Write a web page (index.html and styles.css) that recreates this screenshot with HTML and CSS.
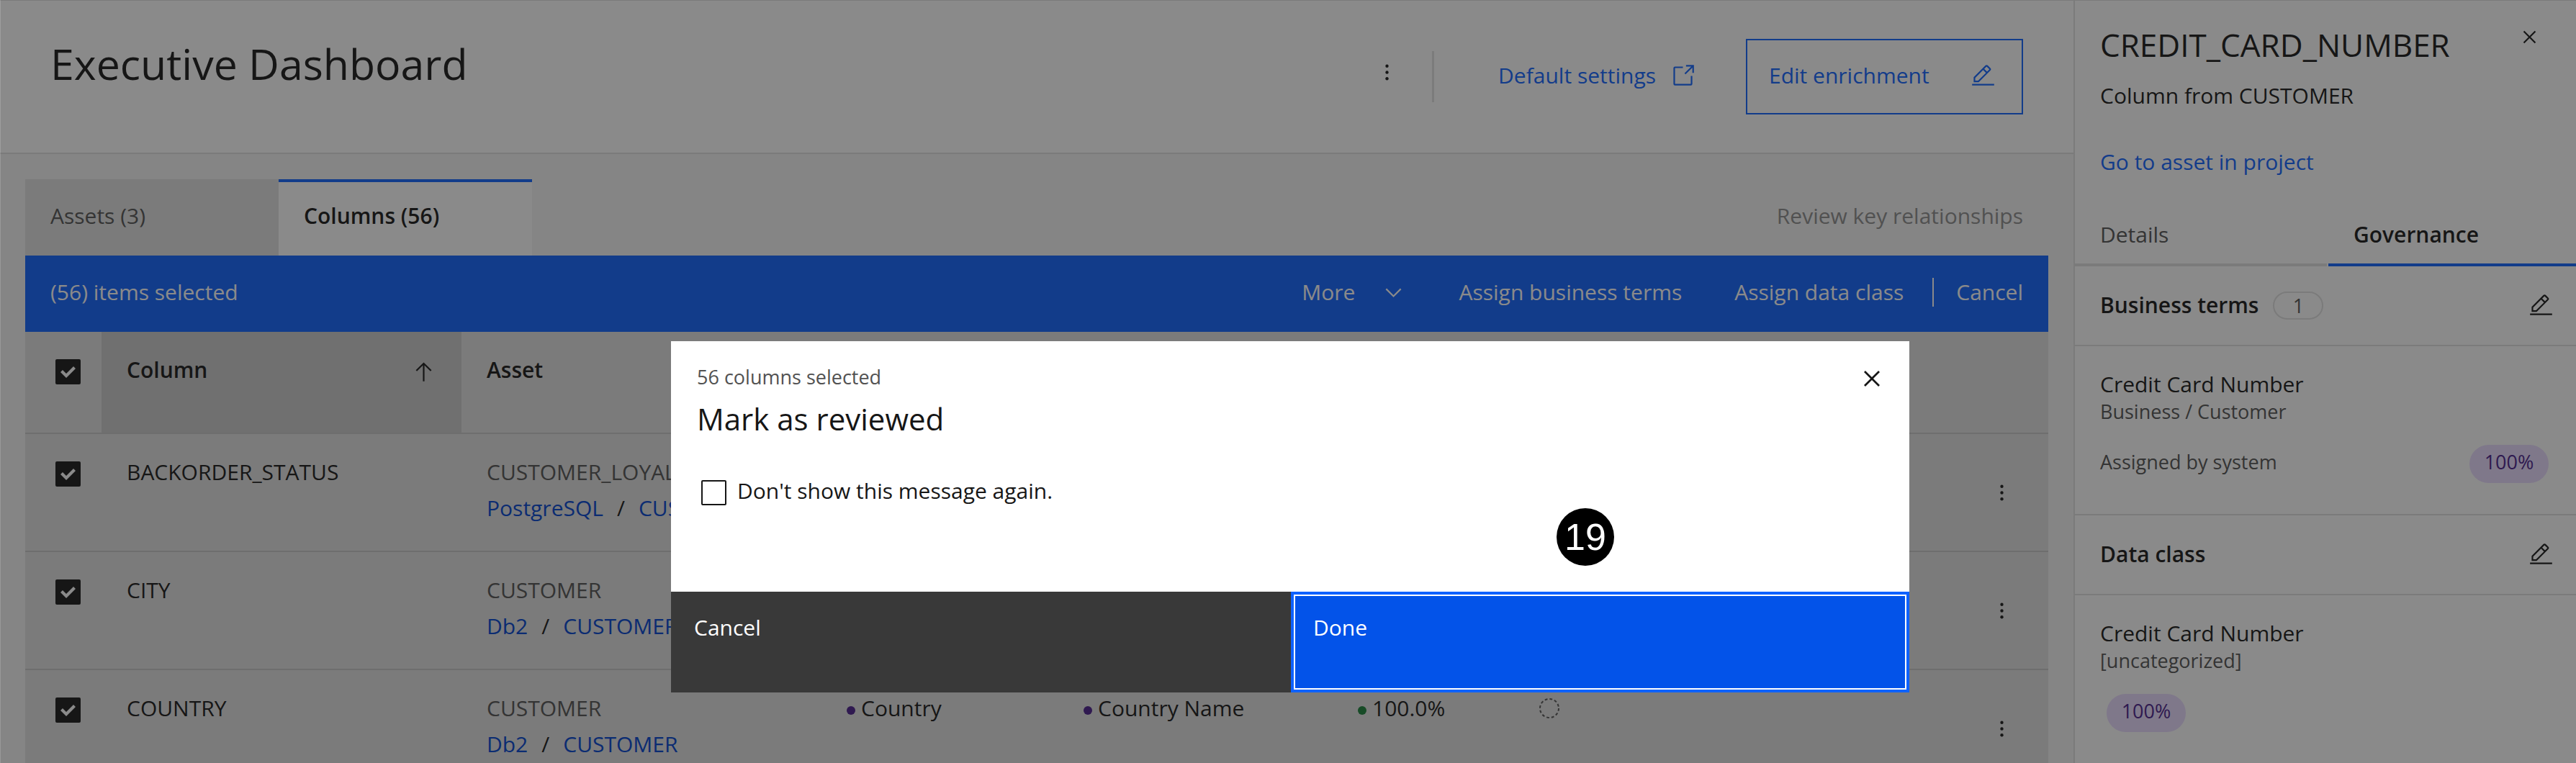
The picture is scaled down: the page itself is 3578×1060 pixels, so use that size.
FILE: index.html
```html
<!DOCTYPE html>
<html lang="en">
<head>
<meta charset="utf-8">
<title>Executive Dashboard</title>
<link rel="stylesheet" href="styles.css">
</head>
<body>
<svg class="sprite" aria-hidden="true">
  <symbol id="i-kebab" viewBox="0 0 32 32"><circle cx="16" cy="8" r="2"/><circle cx="16" cy="16" r="2"/><circle cx="16" cy="24" r="2"/></symbol>
  <symbol id="i-launch" viewBox="0 0 32 32"><path d="M26 28H6a2 2 0 0 1-2-2V6a2 2 0 0 1 2-2h10v2H6v20h20V16h2v10a2 2 0 0 1-2 2z"/><path d="M20 2v2h6.586L18 12.586 19.414 14 28 5.414V12h2V2z"/></symbol>
  <symbol id="i-edit" viewBox="0 0 32 32"><path d="M2 26h28v2H2zM25.4 9c.8-.8.8-2 0-2.8l-3.600-3.600c-.8-.8-2-.8-2.800 0l-15 15V24h6.400L25.400 9zM20.400 4 24 7.600l-3 3L17.400 7l3-3zM6 22v-3.600l10-10 3.600 3.600-10 10H6z"/></symbol>
  <symbol id="i-close" viewBox="0 0 32 32"><path d="M17.414 16 24 9.414 22.586 8 16 14.586 9.414 8 8 9.414 14.586 16 8 22.586 9.414 24 16 17.414 22.586 24 24 22.586z"/></symbol>
  <symbol id="i-arrow" viewBox="0 0 32 32"><path d="M16 4 6 14l1.410 1.410L15 7.830V28h2V7.830l7.590 7.580L26 14z"/></symbol>
  <symbol id="i-chevron" viewBox="0 0 32 32"><path d="M16 22 6 12l1.400-1.400 8.600 8.600 8.600-8.600L26 12z"/></symbol>
  <symbol id="i-pending" viewBox="0 0 28 28"><circle cx="14" cy="14" r="13" fill="none" stroke="currentColor" stroke-width="2" stroke-dasharray="3.800 3.007"/></symbol>
</svg>

<div class="shell">
  <main class="main">
    <header class="page-header">
      <h1 class="page-title">Executive Dashboard</h1>
      <div class="actions">
        <button class="icon-btn actions-menu" aria-label="More options"><svg class="icon"><use href="#i-kebab"/></svg></button>
        <span class="actions-divider"></span>
        <a class="settings-link" href="#settings">Default settings<svg class="icon"><use href="#i-launch"/></svg></a>
        <button class="edit-btn">Edit enrichment<svg class="icon"><use href="#i-edit"/></svg></button>
      </div>
    </header>

    <div class="content">
      <div class="tab-row">
        <div class="tabs" role="tablist">
          <button class="tab" role="tab" aria-selected="false">Assets (3)</button>
          <button class="tab tab-active" role="tab" aria-selected="true">Columns (56)</button>
        </div>
        <button class="review-btn" disabled>Review key relationships</button>
      </div>

      <div class="batch-bar">
        <span class="batch-count">(56) items selected</span>
        <button class="batch-btn batch-more">More<svg class="icon"><use href="#i-chevron"/></svg></button>
        <button class="batch-btn">Assign business terms</button>
        <button class="batch-btn batch-last">Assign data class</button>
        <button class="batch-btn batch-cancel">Cancel</button>
      </div>

      <table class="grid">
        <colgroup><col class="c-check"><col class="c-name"><col class="c-asset"><col class="c-terms"><col class="c-class"><col class="c-quality"><col class="c-status"><col class="c-menu"></colgroup>
        <thead>
          <tr>
            <th class="check-cell"><input class="check" type="checkbox" checked aria-label="Select all columns"></th>
            <th class="sorted" aria-sort="ascending"><div class="th-inner">Column<svg class="icon"><use href="#i-arrow"/></svg></div></th>
            <th>Asset</th><th></th><th></th><th></th><th></th><th></th>
          </tr>
        </thead>
        <tbody>
          <tr>
            <td class="check-cell"><input class="check" type="checkbox" checked aria-label="Select BACKORDER_STATUS"></td>
            <td>BACKORDER_STATUS</td>
            <td><div class="asset-name">CUSTOMER_LOYALTY</div><div class="asset-path"><a href="#postgresql">PostgreSQL</a><span>/</span><a href="#customer">CUSTOMER</a></div></td>
            <td></td><td></td><td></td><td></td>
            <td class="menu-cell"><button class="icon-btn" aria-label="Row options"><svg class="icon"><use href="#i-kebab"/></svg></button></td>
          </tr>
          <tr>
            <td class="check-cell"><input class="check" type="checkbox" checked aria-label="Select CITY"></td>
            <td>CITY</td>
            <td><div class="asset-name">CUSTOMER</div><div class="asset-path"><a href="#db2">Db2</a><span>/</span><a href="#customer">CUSTOMER</a></div></td>
            <td></td><td></td><td></td><td></td>
            <td class="menu-cell"><button class="icon-btn" aria-label="Row options"><svg class="icon"><use href="#i-kebab"/></svg></button></td>
          </tr>
          <tr>
            <td class="check-cell"><input class="check" type="checkbox" checked aria-label="Select COUNTRY"></td>
            <td>COUNTRY</td>
            <td><div class="asset-name">CUSTOMER</div><div class="asset-path"><a href="#db2">Db2</a><span>/</span><a href="#customer">CUSTOMER</a></div></td>
            <td><span class="dot dot-purple"></span>Country</td>
            <td><span class="dot dot-purple"></span>Country Name</td>
            <td><span class="dot dot-green"></span>100.0%</td>
            <td><div class="status"><svg class="status-icon"><use href="#i-pending"/></svg></div></td>
            <td class="menu-cell"><button class="icon-btn" aria-label="Row options"><svg class="icon"><use href="#i-kebab"/></svg></button></td>
          </tr>
        </tbody>
      </table>
    </div>
  </main>

  <aside class="panel">
    <div class="panel-head">
      <div class="panel-title-row">
        <h2 class="panel-title">CREDIT_CARD_NUMBER</h2>
        <button class="icon-btn" aria-label="Close panel"><svg class="icon"><use href="#i-close"/></svg></button>
      </div>
      <p class="panel-sub">Column from CUSTOMER</p>
      <a class="panel-link" href="#asset">Go to asset in project</a>
    </div>
    <div class="panel-tabs" role="tablist">
      <button class="panel-tab" role="tab" aria-selected="false">Details</button>
      <button class="panel-tab panel-tab-active" role="tab" aria-selected="true">Governance</button>
    </div>
    <section>
      <div class="section-head">
        <h3 class="section-title">Business terms</h3><span class="count">1</span>
        <button class="icon-btn section-edit" aria-label="Edit business terms"><svg class="icon"><use href="#i-edit"/></svg></button>
      </div>
      <div class="section-body">
        <p>Credit Card Number</p>
        <p class="minor">Business / Customer</p>
        <div class="score-row"><span class="minor">Assigned by system</span><span class="score score-end">100%</span></div>
      </div>
    </section>
    <section>
      <div class="section-head">
        <h3 class="section-title">Data class</h3>
        <button class="icon-btn section-edit" aria-label="Edit data class"><svg class="icon"><use href="#i-edit"/></svg></button>
      </div>
      <div class="section-body section-body-last">
        <p>Credit Card Number</p>
        <p class="minor">[uncategorized]</p>
        <div class="score-row"><span class="score score-start">100%</span></div>
      </div>
    </section>
  </aside>
</div>

<div class="overlay">
  <div class="dialog" role="dialog" aria-modal="true" aria-labelledby="dialog-title">
    <div class="dialog-body">
      <div>
        <p class="dialog-label">56 columns selected</p>
        <h2 class="dialog-title" id="dialog-title">Mark as reviewed</h2>
        <div class="dialog-option">
          <input class="check" type="checkbox" id="hide-message">
          <label for="hide-message">Don't show this message again.</label>
        </div>
      </div>
      <button class="icon-btn" aria-label="Close"><svg class="icon icon-large"><use href="#i-close"/></svg></button>
    </div>
    <div class="dialog-footer">
      <button class="dialog-btn dialog-cancel">Cancel</button>
      <button class="dialog-btn dialog-done">Done</button>
    </div>
    <span class="callout">19</span>
  </div>
</div>
</body>
</html>
```
FILE: styles.css
```css
*, *::before { box-sizing: border-box; }

body {
  margin: 0;
  font-family: "Open Sans", "Noto Sans", sans-serif;
  font-size: 30px;
  line-height: 40px;
  color: #161616;
}

h1, h2, h3, p { margin: 0; font-weight: 400; }
a { color: #0f62fe; text-decoration: none; }

button {
  font: inherit;
  color: inherit;
  background: none;
  border: 0;
  border-radius: 0;
  padding: 0;
  margin: 0;
  text-align: left;
  white-space: nowrap;
}

.sprite { display: none; }
.icon { display: block; flex: none; width: 35px; height: 35px; fill: currentColor; }
.icon-large { width: 44px; height: 44px; }
.icon-btn { display: block; flex: none; }

.shell {
  display: flex;
  height: 100vh;
  overflow: hidden;
  border-top: 1px solid #e0e0e0;
}

/* Main area */
.main { flex: 1; min-width: 0; background: #f4f4f4; }

.page-header {
  display: flex;
  justify-content: space-between;
  align-items: flex-start;
  padding: 49px 70px 53px;
  background: #fff;
  border-bottom: 2px solid #e0e0e0;
}

.page-title { font-size: 59px; line-height: 76px; }

.actions { display: flex; align-items: center; padding-top: 4px; }
.actions-menu { padding-bottom: 12px; }
.actions-divider { width: 3px; height: 71px; margin: 0 89px 0 45px; background: #e0e0e0; }
.settings-link { display: flex; align-items: center; gap: 20px; margin-right: 70px; padding-bottom: 3px; }

.edit-btn {
  display: flex;
  align-items: center;
  justify-content: space-between;
  width: 385px;
  padding: 29px 36px 32px 30px;
  border: 2px solid #0f62fe;
  color: #0f62fe;
}

.content { padding: 35px 35px 0; }

.tab-row { display: flex; justify-content: space-between; padding-right: 35px; }
.tabs { display: flex; }
.tab { width: 352px; padding: 31px 35px 35px; background: #e0e0e0; color: #525252; }
.tab-active {
  padding-top: 27px;
  border-top: 4px solid #0f62fe;
  background: #fff;
  color: #161616;
  font-weight: 600;
}
.review-btn { padding-bottom: 4px; color: #8d8d8d; }

.batch-bar {
  display: flex;
  align-items: flex-start;
  padding: 31px 35px 35px;
  background: #0f62fe;
  color: #fff;
}
.batch-count { flex: 1; }
.batch-btn { margin-right: 73px; }
.batch-more { display: flex; align-items: center; gap: 36px; }
.batch-last { margin-right: 40px; }
.batch-cancel { margin-right: 0; padding-left: 31px; border-left: 2px solid #fff; }

.grid { width: 100%; table-layout: fixed; border-collapse: separate; border-spacing: 0; background: #e0e0e0; }
.c-check { width: 106px; }
.c-name, .c-asset { width: 500px; }
.c-terms { width: 329px; }
.c-class { width: 381px; }
.c-quality { width: 252px; }
.c-menu { width: 128px; }

.grid th, .grid td {
  padding: 33px 35px 0;
  text-align: left;
  vertical-align: top;
  border-bottom: 2px solid #c6c6c6;
  white-space: nowrap;
}
.grid th { height: 142px; font-weight: 600; }
.grid td { height: 164px; }
.grid .sorted { background: #cacaca; }
.th-inner { display: flex; justify-content: space-between; align-items: flex-end; }
.grid .check-cell { padding: 38px 0 0 42px; }
.grid .menu-cell { padding: 0 46px; vertical-align: middle; }

.asset-name { color: #525252; }
.asset-path { display: flex; gap: 19px; padding-top: 10px; }
.asset-path a { color: #0043ce; }

.dot { display: inline-block; width: 12px; height: 12px; margin-right: 8px; border-radius: 50%; vertical-align: middle; }
.dot-purple { background: #491d8b; }
.dot-green { background: #198038; }
.status { display: flex; align-items: center; height: 40px; color: #525252; }
.status-icon { width: 28px; height: 28px; }

.check {
  appearance: none;
  display: block;
  flex: none;
  width: 35px;
  height: 35px;
  margin: 0;
  border: 2px solid #161616;
  border-radius: 2px;
}
.check:checked { background: #161616; }
.check:checked::before {
  content: "";
  display: block;
  height: 100%;
  background: #fff;
  clip-path: polygon(5px 16px, 8px 13px, 13px 18px, 23px 8px, 26px 11px, 13px 24px);
}

/* Side panel */
.panel { flex: none; width: 698px; background: #fff; border-left: 2px solid #e0e0e0; }
.panel-head { padding: 33px 47px 25px 35px; }
.panel-title-row { display: flex; justify-content: space-between; align-items: flex-start; }
.panel-title { font-size: 44px; line-height: 56px; }
.panel-sub { padding-top: 23px; }
.panel-link { display: block; padding-top: 52px; }

.panel-tabs { display: grid; grid-template-columns: 350px 1fr; gap: 2px; }
.panel-tab { padding: 36px 35px 20px; border-bottom: 4px solid #e0e0e0; color: #525252; }
.panel-tab-active { border-bottom-color: #0f62fe; color: #161616; font-weight: 600; }

.section-head {
  display: flex;
  align-items: center;
  padding: 34px 31px 35px 35px;
  border-bottom: 2px solid #e0e0e0;
}
.section-title { font-size: 30px; font-weight: 600; }
.section-edit { margin-left: auto; }
.count {
  width: 70px;
  margin-left: 20px;
  border: 2px solid #e0e0e0;
  border-radius: 20px;
  font-size: 27px;
  line-height: 35px;
  text-align: center;
  color: #525252;
}
.section-body { padding: 33px 38px 43px 35px; border-bottom: 2px solid #e0e0e0; }
.section-body-last { border-bottom: 0; }
.minor { font-size: 27px; line-height: 36px; color: #525252; }
.score-row { display: flex; align-items: flex-start; padding-top: 28px; }
.score-row .minor { padding-top: 6px; }
.score {
  width: 110px;
  padding: 6px 0 11px;
  border-radius: 27px;
  background: #e8daff;
  color: #491d8b;
  font-size: 27px;
  line-height: 36px;
  text-align: center;
}
.score-end { margin-left: auto; }
.score-start { margin-left: 9px; }

/* Dialog */
.overlay {
  position: fixed;
  inset: 0;
  padding: 474px 0 0 5px;
  border-left: 1px solid rgba(255, 255, 255, 0.16);
  background: rgba(22, 22, 22, 0.5);
}
.dialog { position: relative; width: 90%; max-width: 1720px; margin: 0 auto; background: #fff; }
.dialog-body {
  display: flex;
  justify-content: space-between;
  align-items: flex-start;
  padding: 30px 30px 120px 36px;
}
.dialog-label { padding-top: 2px; font-size: 27px; line-height: 36px; color: #525252; }
.dialog-title { padding-top: 12px; font-size: 42px; line-height: 56px; }
.dialog-option { display: flex; align-items: flex-end; gap: 15px; padding: 52px 0 0 6px; }

.dialog-footer { display: flex; }
.dialog-btn { flex: 1 1 0; padding: 30px 32px 70px; color: #fff; }
.dialog-cancel { background: #393939; }
.dialog-done {
  padding: 26px 27px 66px;
  border: 4px solid #0f62fe;
  background: #0353e9;
  box-shadow: inset 0 0 0 2px #fff;
}

.callout {
  position: absolute;
  left: 1230px;
  top: 232px;
  width: 80px;
  border-radius: 50%;
  background: #000;
  color: #fff;
  font-family: "Liberation Sans", sans-serif;
  font-size: 52px;
  line-height: 80px;
  text-align: center;
}
```
